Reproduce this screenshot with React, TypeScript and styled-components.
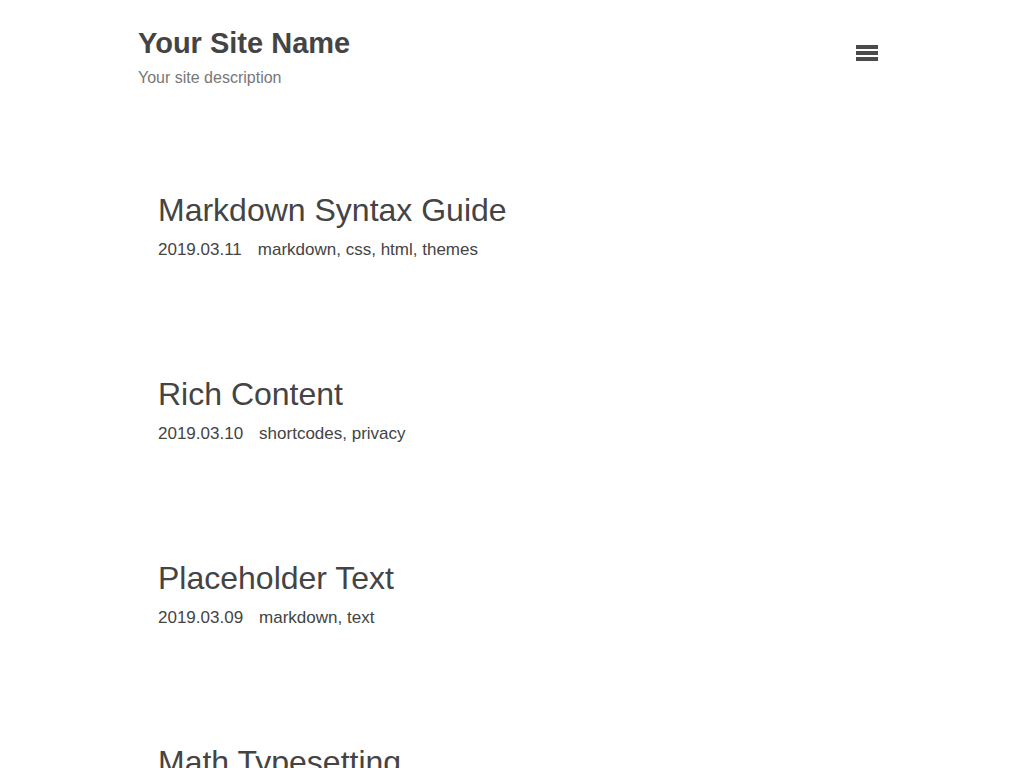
import React from "react";
import styled, { createGlobalStyle } from "styled-components";

const Global = createGlobalStyle`
  html, body { margin: 0; padding: 0; background: #fff; }
  body { font-family: "Liberation Sans", Arial, sans-serif; color: #444; }
`;

const Page = styled.div`
  width: 748px;
  margin: 0 auto;
`;

const Header = styled.header`
  display: flex;
  justify-content: space-between;
  align-items: flex-start;
  padding-top: 27px;
`;

const Brand = styled.div`
  display: flex;
  flex-direction: column;
`;

const SiteName = styled.a`
  font-size: 29px;
  font-weight: bold;
  color: #444;
  text-decoration: none;
  line-height: 32px;
`;

const SiteDesc = styled.div`
  font-size: 16px;
  color: #777;
  margin-top: 9px;
  line-height: 20px;
`;

const MenuButton = styled.button`
  border: none;
  background: none;
  padding: 0;
  margin-top: 18px;
  margin-right: 8px;
  display: flex;
  flex-direction: column;
  gap: 2.5px;
  cursor: pointer;
`;

const Bar = styled.span`
  display: block;
  width: 22px;
  height: 3.5px;
  background: #4a4a4a;
`;

const PostList = styled.main`
  padding: 102px 20px 0;
  display: flex;
  flex-direction: column;
  gap: 114px;
`;

const Post = styled.article`
  display: flex;
  flex-direction: column;
`;

const PostTitle = styled.h2`
  margin: 0;
  font-size: 32px;
  font-weight: normal;
  color: #444;
  line-height: 40px;
`;

const Meta = styled.div`
  margin-top: 10px;
  font-size: 17px;
  color: #444;
  display: flex;
  gap: 16px;
  line-height: 20px;
`;

const posts = [
  { title: "Markdown Syntax Guide", date: "2019.03.11", tags: "markdown, css, html, themes" },
  { title: "Rich Content", date: "2019.03.10", tags: "shortcodes, privacy" },
  { title: "Placeholder Text", date: "2019.03.09", tags: "markdown, text" },
  { title: "Math Typesetting", date: "2019.03.08", tags: "mathematics, katex" },
];

export default function App() {
  return (
    <>
      <Global />
      <Page>
        <Header>
          <Brand>
            <SiteName href="#">Your Site Name</SiteName>
            <SiteDesc>Your site description</SiteDesc>
          </Brand>
          <MenuButton aria-label="menu">
            <Bar />
            <Bar />
            <Bar />
          </MenuButton>
        </Header>
        <PostList>
          {posts.map((p) => (
            <Post key={p.title}>
              <PostTitle>{p.title}</PostTitle>
              <Meta>
                <span>{p.date}</span>
                <span>{p.tags}</span>
              </Meta>
            </Post>
          ))}
        </PostList>
      </Page>
    </>
  );
}
